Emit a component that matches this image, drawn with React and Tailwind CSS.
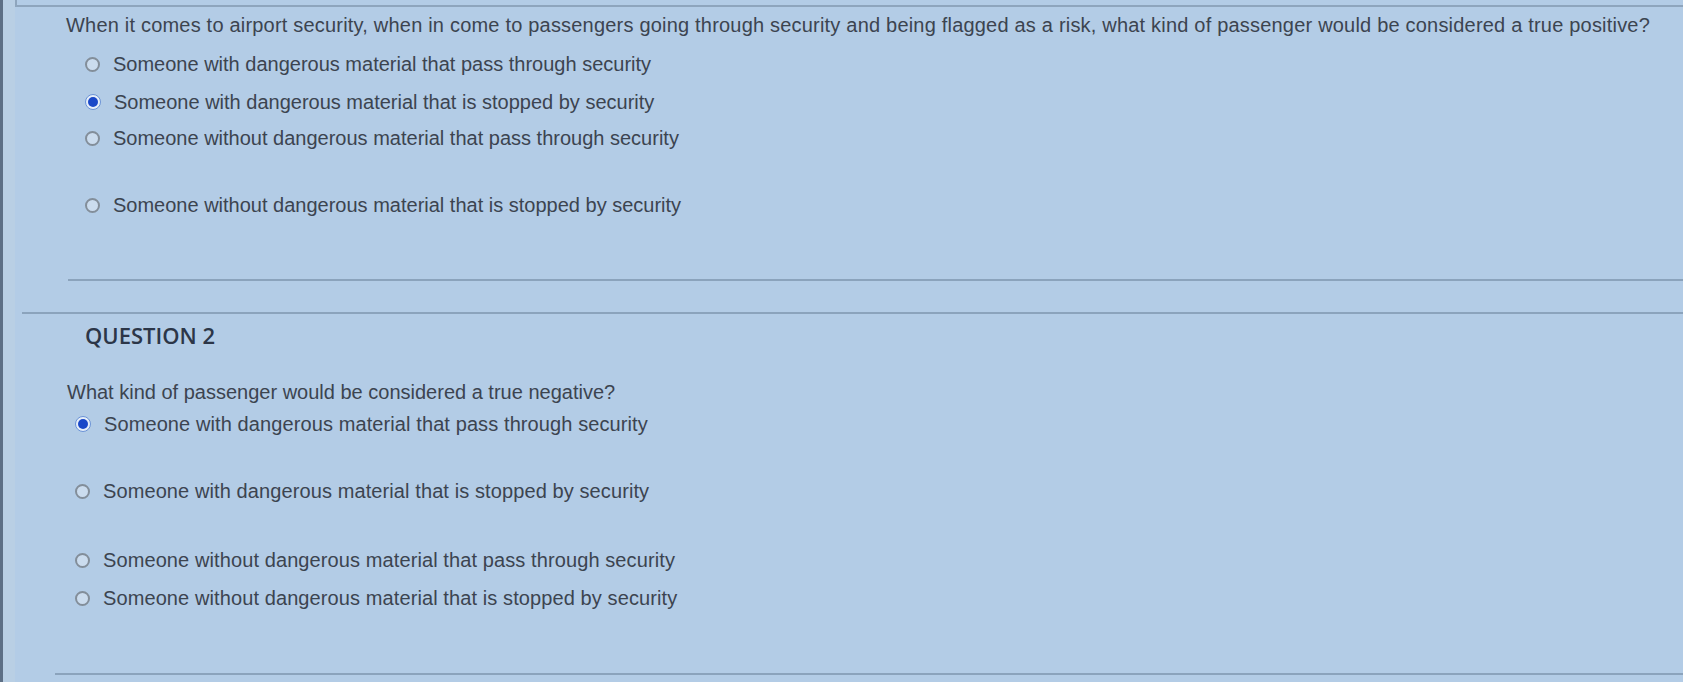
import React from "react";

const Radio = ({ checked }) =>
  checked ? (
    <span className="flex h-[16px] w-[16px] shrink-0 items-center justify-center rounded-full border border-[#6b93d6] bg-[#e6eef9]">
      <span className="h-[10px] w-[10px] rounded-full bg-[#1a48c8]" />
    </span>
  ) : (
    <span className="h-[15px] w-[15px] shrink-0 rounded-full border-2 border-[#838e9a] bg-[#cbdcee]" />
  );

const Option = ({ checked, label, className, wide }) => (
  <div className={"flex h-[24px] items-center gap-[13px] " + className}>
    <Radio checked={checked} />
    <span className={wide ? "whitespace-nowrap text-[20px] leading-[24px] tracking-[0.1px]" : "whitespace-nowrap text-[20px] leading-[24px]"}>
      {label}
    </span>
  </div>
);

const App = () => {
  return (
    <div className="flex h-[682px] w-full overflow-hidden bg-[#b3cce6] font-['Liberation_Sans',Arial,sans-serif] text-[#3c4450]">
      <div className="w-[3px] shrink-0 bg-[#5d6f85]" />
      <div className="w-[12px] shrink-0 bg-[#b9cfe4]" />
      <div className="flex flex-1 flex-col">
        <div className="h-[7px] border-b-2 border-l-2 border-[#8ea5bd]" />

        <p className="mt-[6px] h-[24px] whitespace-nowrap pl-[51px] text-[20px] leading-[24px] tracking-[0.2px]">
          When it comes to airport security, when in come to passengers going through security and being flagged as a risk, what kind of passenger would be considered a true positive?
        </p>

        <div className="flex flex-col pl-[70px]">
          <Option className="mt-[15px]" label="Someone with dangerous material that pass through security" />
          <Option className="mt-[14px]" checked label="Someone with dangerous material that is stopped by security" />
          <Option className="mt-[12px]" label="Someone without dangerous material that pass through security" />
          <Option className="mt-[43px]" label="Someone without dangerous material that is stopped by security" />
        </div>

        <div className="ml-[53px] mt-[62px] h-[2px] bg-[#8ba3bc]" />
        <div className="ml-[7px] mt-[31px] h-[2px] bg-[#8ba3bc]" />

        <h2 className="mt-[7px] h-[28px] pl-[70px] font-['Open_Sans',sans-serif] text-[22px] font-semibold leading-[28px] text-[#2c3648]">
          QUESTION 2
        </h2>

        <p className="mt-[31px] h-[24px] whitespace-nowrap pl-[52px] text-[20px] leading-[24px]">
          What kind of passenger would be considered a true negative?
        </p>

        <div className="flex flex-col pl-[60px]">
          <Option wide className="mt-[8px]" checked label="Someone with dangerous material that pass through security" />
          <Option wide className="mt-[43px]" label="Someone with dangerous material that is stopped by security" />
          <Option wide className="mt-[45px]" label="Someone without dangerous material that pass through security" />
          <Option wide className="mt-[14px]" label="Someone without dangerous material that is stopped by security" />
        </div>

        <div className="ml-[40px] mt-[63px] h-[2px] bg-[#8ba3bc]" />
      </div>
    </div>
  );
};

export default App;
